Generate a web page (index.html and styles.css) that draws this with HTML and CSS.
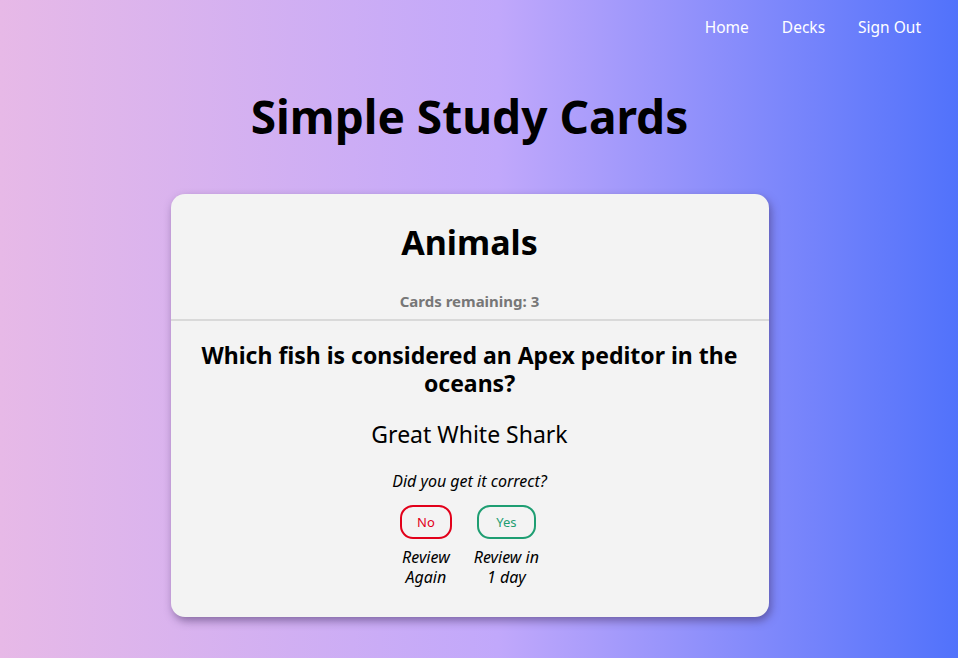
FILE: index.html
```html
<!DOCTYPE html>
<html lang="en">
<head>
<meta charset="utf-8">
<title>Simple Study Cards</title>
<link rel="stylesheet" href="styles.css">
</head>
<body>
<div class="page">
<nav class="nav">
  <a href="#" class="nav-link">Home</a>
  <a href="#" class="nav-link">Decks</a>
  <a href="#" class="nav-link">Sign Out</a>
</nav>
<h1 class="title">Simple Study Cards</h1>
<main class="card">
  <header class="card-head">
    <h2 class="deck-name">Animals</h2>
    <p class="remaining">Cards remaining: 3</p>
  </header>
  <section class="card-body">
    <h3 class="question">Which fish is considered an Apex peditor in the oceans?</h3>
    <p class="answer">Great White Shark</p>
    <p class="prompt">Did you get it correct?</p>
    <div class="choices">
      <div class="choice">
        <button class="btn btn-no">No</button>
        <span class="choice-note">Review<br>Again</span>
      </div>
      <div class="choice">
        <button class="btn btn-yes">Yes</button>
        <span class="choice-note">Review in<br>1 day</span>
      </div>
    </div>
  </section>
</main>
</div>
</body>
</html>
```
FILE: styles.css
```css
html, body {
  margin: 0;
  padding: 0;
}
body {
  min-height: 658px;
  background: linear-gradient(to right, #e7b9e7 0%, #c1a8fb 52%, #5172fb 100%);
  font-family: "Noto Sans", "Open Sans", sans-serif;
  color: #000;
}
.page {
  padding-right: 19px;
}
.nav {
  display: flex;
  justify-content: flex-end;
  gap: 33px;
  padding: 15px 18px 0 0;
  height: 24px;
}
.nav-link {
  color: #fff;
  text-decoration: none;
  font-size: 15.5px;
  line-height: 24px;
}
.title {
  margin: 49px 0 0;
  text-align: center;
  font-size: 46px;
  line-height: 56px;
  font-weight: 700;
}
.card {
  width: 598px;
  margin: 50px auto 0;
  background: #f3f3f3;
  border-radius: 14px;
  box-shadow: 2px 4px 8px rgba(60, 40, 90, 0.5);
  padding-bottom: 30px;
}
.card-head {
  text-align: center;
  border-bottom: 2px solid #d9d9d9;
  padding-top: 24px;
}
.deck-name {
  margin: 0;
  font-size: 34px;
  line-height: 48px;
  font-weight: 700;
}
.remaining {
  margin: 25px 0 0;
  padding-bottom: 8px;
  font-size: 15px;
  line-height: 20px;
  font-weight: 700;
  color: #777;
}
.card-body {
  text-align: center;
  padding: 20px 20px 0;
}
.question {
  margin: 0;
  font-size: 23px;
  line-height: 28px;
  font-weight: 700;
}
.answer {
  margin: 22px 0 0;
  font-size: 23px;
  line-height: 30px;
}
.prompt {
  margin: 21px 0 0;
  font-size: 16px;
  line-height: 22px;
  font-style: italic;
}
.choices {
  display: flex;
  justify-content: center;
  gap: 22px;
  margin-top: 13px;
}
.choice {
  display: flex;
  flex-direction: column;
  align-items: center;
}
.btn {
  font-family: inherit;
  font-size: 13px;
  line-height: 16px;
  background: transparent;
  border: 2px solid;
  border-radius: 13px;
  padding: 7px 15px;
  cursor: pointer;
}
.btn-no {
  color: #e2001a;
  border-color: #e2001a;
}
.btn-yes {
  color: #1e9e72;
  border-color: #1e9e72;
  padding: 7px 17px;
}
.choice-note {
  margin-top: 8px;
  font-size: 16px;
  line-height: 20px;
  font-style: italic;
}
```
